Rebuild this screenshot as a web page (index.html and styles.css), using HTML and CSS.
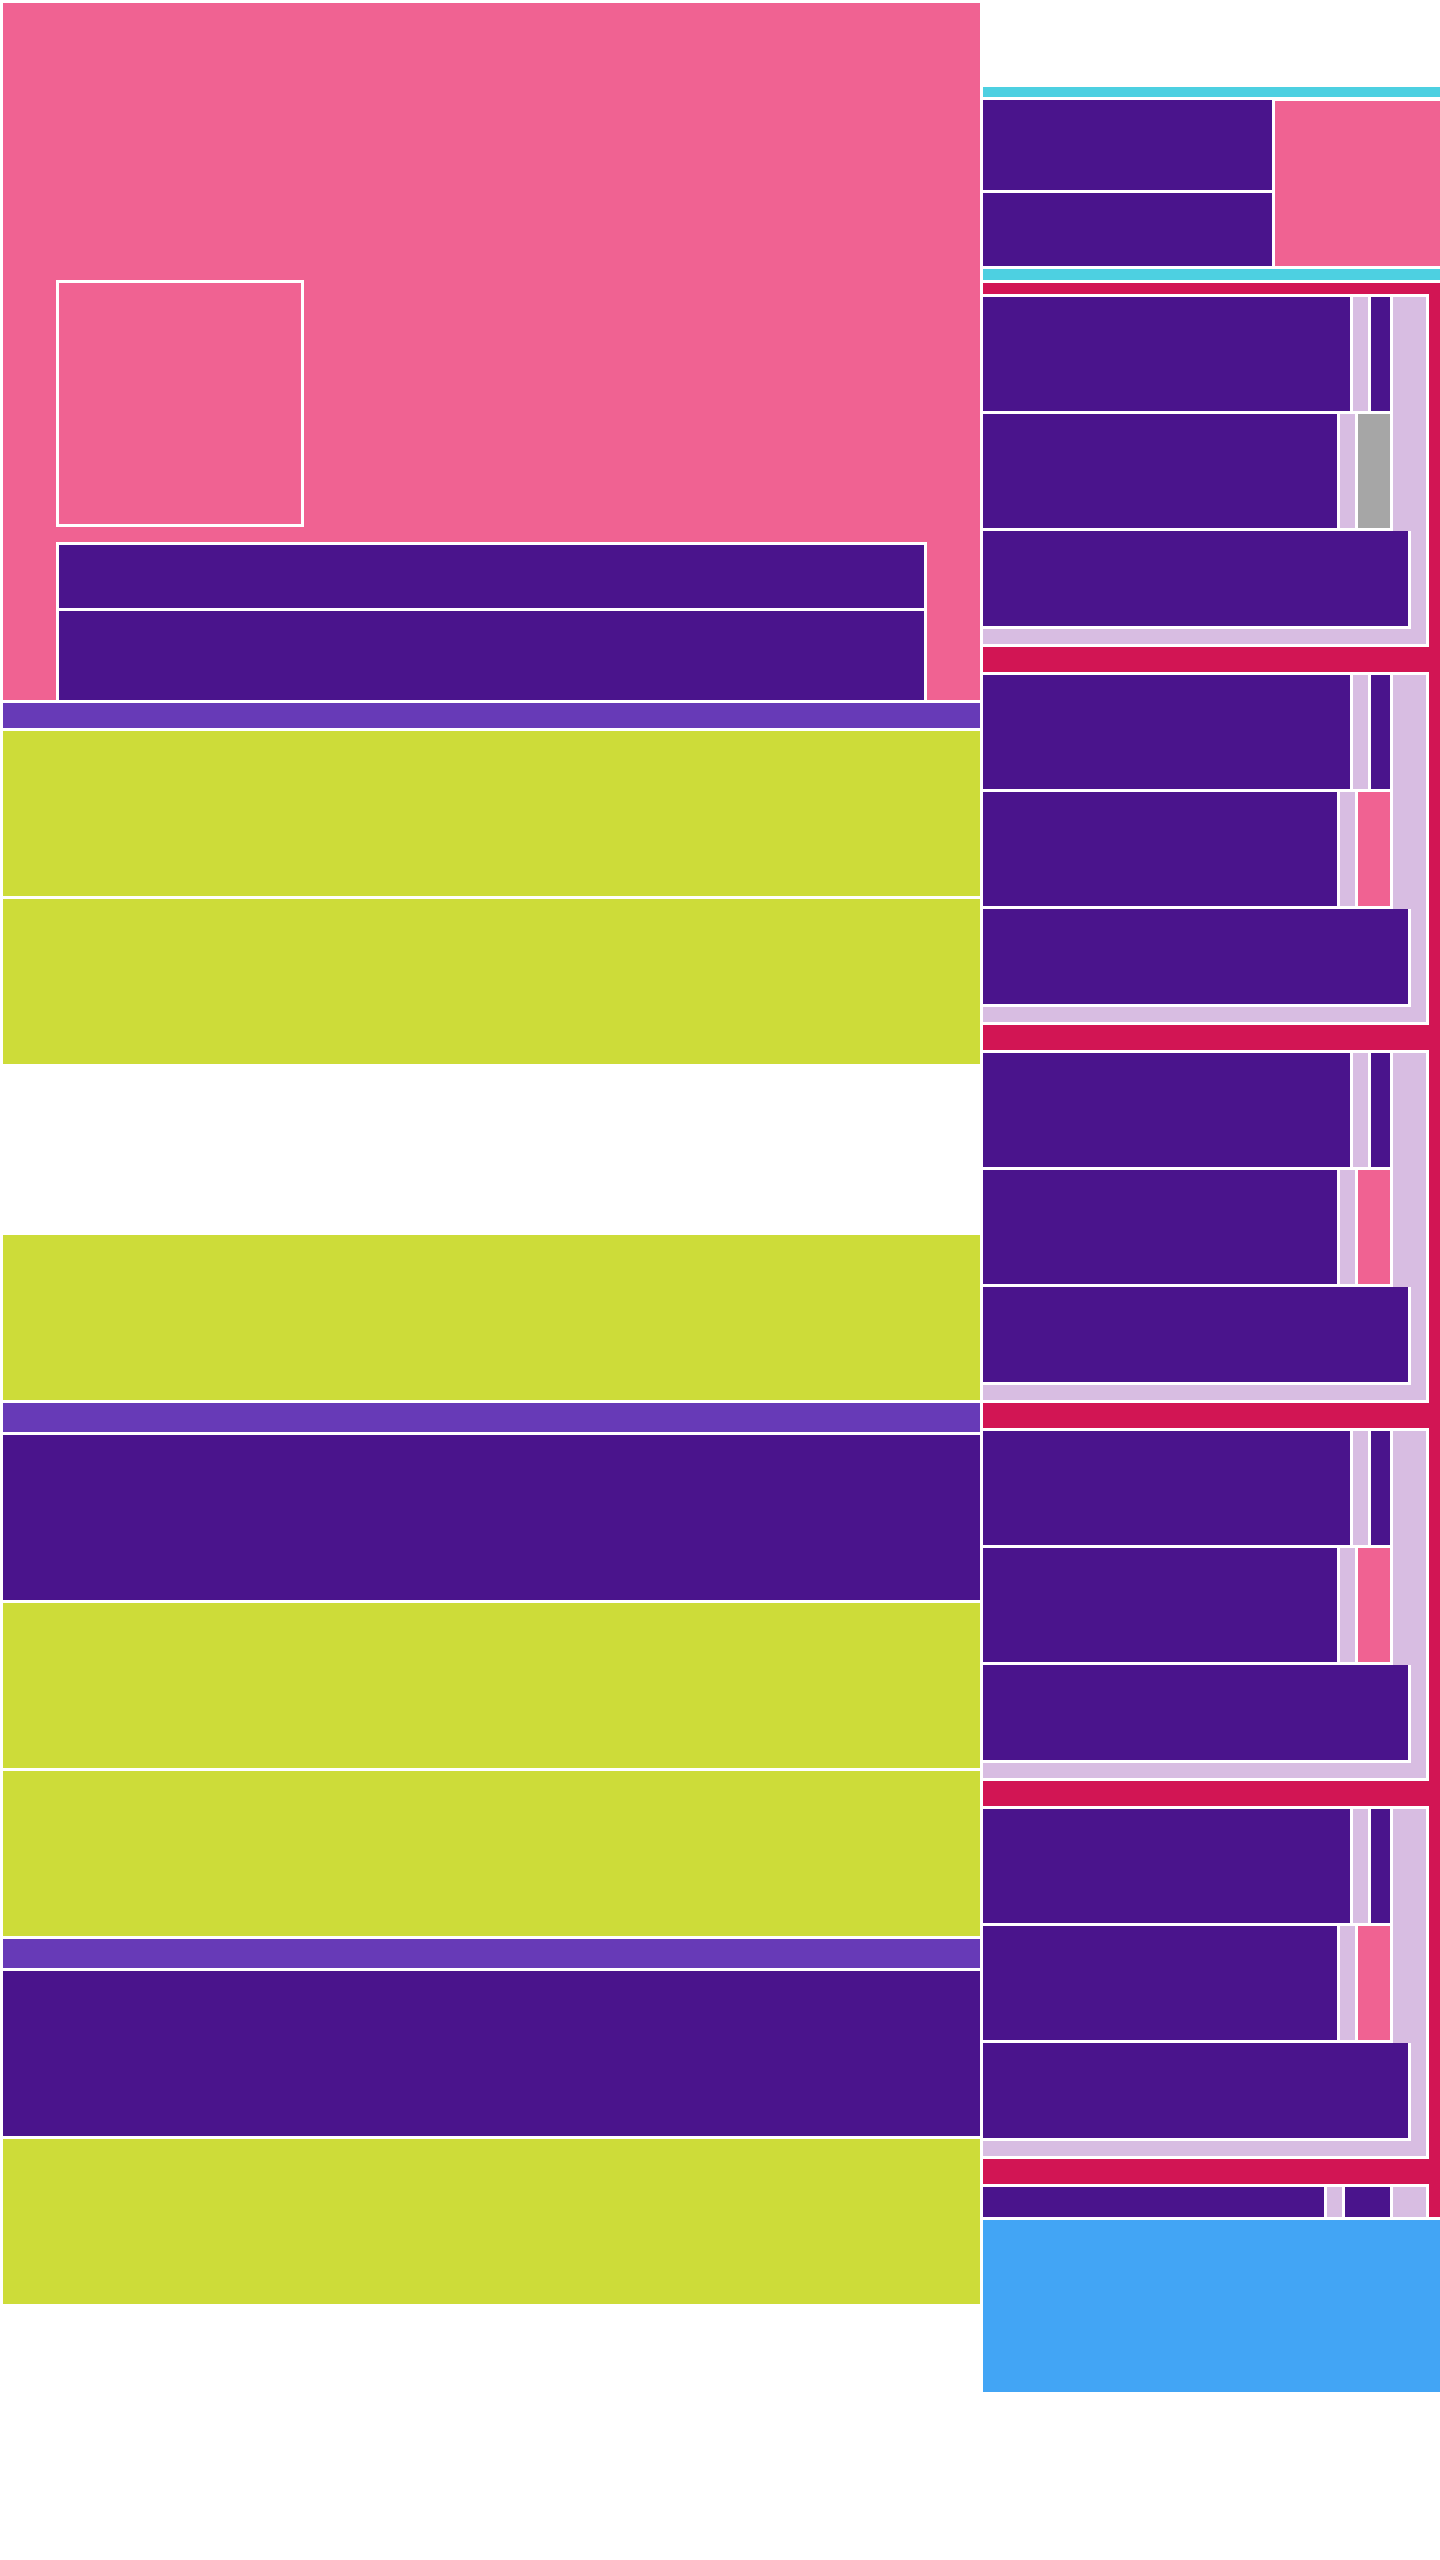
FILE: index.html
```html
<!DOCTYPE html>
<html lang="en">
<head>
  <meta charset="UTF-8">
  <meta name="viewport" content="width=device-width, initial-scale=1.0">
  <title>Layout Blocks</title>
  <link rel="stylesheet" href="styles.css">
</head>
<body>
  <div class="page">
    <!-- Coluna principal -->
    <main class="main-col">
      <section class="hero">
        <div class="hero-frame"></div>
        <div class="hero-stack">
          <div class="hero-bar hero-bar-top"></div>
          <div class="hero-bar hero-bar-bottom"></div>
        </div>
      </section>
      <div class="strip strip-thin"></div>
      <div class="block lime"></div>
      <div class="block lime"></div>
      <div class="block empty"></div>
      <div class="block lime"></div>
      <div class="strip"></div>
      <div class="block purple"></div>
      <div class="block lime"></div>
      <div class="block lime"></div>
      <div class="strip"></div>
      <div class="block purple"></div>
      <div class="block lime"></div>
    </main>

    <!-- Coluna lateral -->
    <aside class="side-col">
      <div class="rule rule-top"></div>
      <div class="side-head">
        <div class="side-head-stack">
          <div class="side-head-a"></div>
          <div class="side-head-b"></div>
        </div>
        <div class="side-head-pic"></div>
      </div>
      <div class="rule rule-bottom"></div>

      <div class="feed">
        <div class="card">
          <div class="row row-1"><div class="cell main"></div><div class="cell pad"></div><div class="cell tag"></div></div>
          <div class="row row-2"><div class="cell main"></div><div class="cell pad"></div><div class="cell thumb muted"></div></div>
          <div class="row row-3"><div class="cell main"></div></div>
        </div>
        <div class="card">
          <div class="row row-1"><div class="cell main"></div><div class="cell pad"></div><div class="cell tag"></div></div>
          <div class="row row-2"><div class="cell main"></div><div class="cell pad"></div><div class="cell thumb"></div></div>
          <div class="row row-3"><div class="cell main"></div></div>
        </div>
        <div class="card">
          <div class="row row-1"><div class="cell main"></div><div class="cell pad"></div><div class="cell tag"></div></div>
          <div class="row row-2"><div class="cell main"></div><div class="cell pad"></div><div class="cell thumb"></div></div>
          <div class="row row-3"><div class="cell main"></div></div>
        </div>
        <div class="card">
          <div class="row row-1"><div class="cell main"></div><div class="cell pad"></div><div class="cell tag"></div></div>
          <div class="row row-2"><div class="cell main"></div><div class="cell pad"></div><div class="cell thumb"></div></div>
          <div class="row row-3"><div class="cell main"></div></div>
        </div>
        <div class="card">
          <div class="row row-1"><div class="cell main"></div><div class="cell pad"></div><div class="cell tag"></div></div>
          <div class="row row-2"><div class="cell main"></div><div class="cell pad"></div><div class="cell thumb"></div></div>
          <div class="row row-3"><div class="cell main"></div></div>
        </div>
        <div class="card">
          <div class="row row-last"><div class="cell main"></div><div class="cell pad"></div><div class="cell tag"></div></div>
          <div class="row row-2"><div class="cell main"></div><div class="cell pad"></div><div class="cell thumb"></div></div>
        </div>
      </div>

      <div class="side-foot"></div>
    </aside>
  </div>
</body>
</html>
```

FILE: styles.css
```css
/* Base */
body {
  margin: 0;
  background-color: #fff;
  font-family: "Liberation Sans", Arial, sans-serif;
}

.page {
  display: flex;
  gap: 3px;
  padding: 3px 0 0 3px;
  width: 1440px;
  box-sizing: border-box;
  overflow: hidden;
}

/* Coluna principal */
.main-col {
  width: 977px;
  flex-shrink: 0;
  display: flex;
  flex-direction: column;
  gap: 3px;
}

.hero {
  height: 697px;
  box-sizing: border-box;
  padding: 277px 0 0 53px;
  background-color: #f06292;
  display: flex;
  flex-direction: column;
}

.hero-frame {
  width: 248px;
  height: 247px;
  box-sizing: border-box;
  border: 3px solid #fff;
}

.hero-stack {
  width: 871px;
  box-sizing: border-box;
  margin-top: 15px;
  border: 3px solid #fff;
  border-bottom: none;
  background-color: #fff;
  display: flex;
  flex-direction: column;
  gap: 3px;
}

.hero-bar {
  background-color: #4a148c;
}

.hero-bar-top {
  height: 63px;
}

.hero-bar-bottom {
  height: 89px;
}

.strip {
  height: 29px;
  background-color: #673ab7;
}

.strip-thin {
  height: 25px;
}

.block {
  height: 165px;
}

.lime {
  background-color: #cddc39;
}

.purple {
  background-color: #4a148c;
}

/* Coluna lateral */
.side-col {
  width: 457px;
  flex-shrink: 0;
  display: flex;
  flex-direction: column;
  gap: 3px;
}

.rule {
  background-color: #4dd0e1;
}

.rule-top {
  margin-top: 84px;
  height: 10px;
}

.rule-bottom {
  height: 11px;
}

.side-head {
  height: 166px;
  display: flex;
  gap: 3px;
}

.side-head-stack {
  width: 289px;
  display: flex;
  flex-direction: column;
  gap: 3px;
}

.side-head-a {
  height: 90px;
  background-color: #4a148c;
}

.side-head-b {
  flex: 1;
  background-color: #4a148c;
}

.side-head-pic {
  flex: 1;
  margin-top: 1px;
  background-color: #f06292;
}

/* Lista de cards */
.feed {
  height: 1934px;
  box-sizing: border-box;
  padding-top: 11px;
  background-color: #d21554;
  overflow: hidden;
}

.card {
  width: 446px;
  box-sizing: border-box;
  margin-bottom: 25px;
  padding-bottom: 15px;
  border: 3px solid #fff;
  border-left: none;
  background-color: #d8bde2;
  display: flex;
  flex-direction: column;
  align-items: flex-start;
}

.row {
  display: flex;
  border-bottom: 3px solid #fff;
}

.row-1,
.row-2 {
  height: 114px;
}

.row-3 {
  height: 95px;
}

.row-last {
  height: 114px;
}

.cell {
  border-right: 3px solid #fff;
}

.main {
  background-color: #4a148c;
}

.pad {
  width: 15px;
  background-color: #d8bde2;
}

.row-1 .main {
  width: 367px;
}

.row-2 .main {
  width: 354px;
}

.row-3 .main {
  width: 425px;
}

.row-last .main {
  width: 341px;
}

.tag {
  width: 19px;
  background-color: #4a148c;
}

.row-last .tag {
  width: 45px;
}

.thumb {
  width: 32px;
  background-color: #f06292;
}

.thumb.muted {
  background-color: #a6a6a6;
}

.side-foot {
  height: 172px;
  background-color: #42a5f5;
}
```
